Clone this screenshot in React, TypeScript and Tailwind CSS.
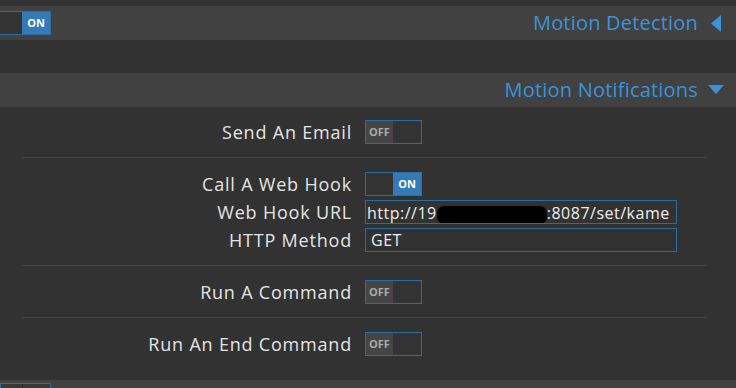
import { ReactNode } from "react";

const font = { fontFamily: '"Open Sans", "DejaVu Sans", sans-serif' };

function Toggle({ on }: { on: boolean }) {
  return (
    <div className="flex h-[24px] w-[57px] border border-[#2b6ca3] bg-[#333]">
      {on ? (
        <>
          <div className="w-[27px]" />
          <div className="flex flex-1 items-center justify-center bg-[#337ab7] text-[11px] font-bold text-white">ON</div>
        </>
      ) : (
        <>
          <div className="flex w-[27px] items-center justify-center bg-[#454545] text-[11px] font-bold text-[#aaa]">OFF</div>
          <div className="flex-1" />
        </>
      )}
    </div>
  );
}

function Row({ label, children }: { label: string; children: ReactNode }) {
  return (
    <div className="grid grid-cols-[330px_1fr] items-center gap-[13px]">
      <div className="text-right text-[18px] leading-[24px] tracking-[0.8px] text-[#e4e4e4]">{label}</div>
      <div>{children}</div>
    </div>
  );
}

function Group({ children, first }: { children: ReactNode; first?: boolean }) {
  return (
    <div className={`${first ? "pt-[13px]" : "border-t border-[#464646] pt-[14px]"} flex flex-col gap-[4px] pb-[13px]`}>
      {children}
    </div>
  );
}

function Header({ title, open }: { title: string; open: boolean }) {
  return (
    <div className="flex h-[34px] items-center bg-[#414141] pr-[12px]">
      <div className="flex-1" />
      <span className="text-[20px] tracking-[0.2px] text-[#3a93da]">{title}</span>
      <span className="ml-[10px] flex w-[16px] justify-center">
        {open ? (
          <svg width="16" height="10" viewBox="0 0 16 10"><path d="M0 0h16L8 9z" fill="#3a93da" /></svg>
        ) : (
          <svg width="10" height="17" viewBox="0 0 10 17"><path d="M10 0v17L0 8.5z" fill="#3a93da" /></svg>
        )}
      </span>
    </div>
  );
}

function Field({ children }: { children: ReactNode }) {
  return (
    <div className="h-[24px] w-[312px] overflow-hidden whitespace-nowrap border border-[#2b6ca3] px-[1px] text-[16px] leading-[22px] tracking-[0.5px] text-[#eee]">
      {children}
    </div>
  );
}

export default function App() {
  return (
    <div className="h-[388px] w-[736px] overflow-hidden bg-[#323232]" style={font}>
      <div className="h-[6px]" />
      <div className="relative">
        <Header title="Motion Detection" open={false} />
        <div className="absolute left-[-6px] top-[5px]">
          <Toggle on />
        </div>
      </div>
      <div className="h-[33px]" />
      <Header title="Motion Notifications" open />
      <div className="mx-[22px] h-[273px] w-[685px]">
        <Group first>
          <Row label="Send An Email"><Toggle on={false} /></Row>
        </Group>
        <Group>
          <Row label="Call A Web Hook"><Toggle on /></Row>
          <Row label="Web Hook URL">
            <Field>
              http://19
              <span className="inline-block h-[18px] w-[110px] translate-y-[5px] rounded-[7px] bg-black" />
              :8087/set/kame
            </Field>
          </Row>
          <Row label="HTTP Method"><Field><span className="pl-[4px]">GET</span></Field></Row>
        </Group>
        <Group>
          <Row label="Run A Command"><Toggle on={false} /></Row>
        </Group>
        <Group>
          <Row label="Run An End Command"><Toggle on={false} /></Row>
        </Group>
      </div>
      <div className="h-[8px] bg-[#414141] pt-[3px]">
        <div className="flex h-[10px] w-[51px] border border-[#2b6ca3] bg-[#383838]">
          <div className="w-[22px] border-r border-[#2b2b2b]" />
        </div>
      </div>
    </div>
  );
}
